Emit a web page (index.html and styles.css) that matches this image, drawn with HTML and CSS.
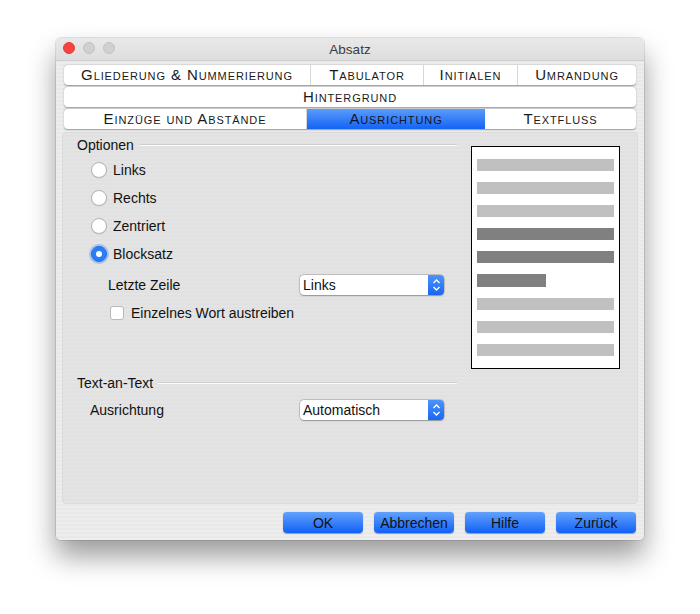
FILE: index.html
```html
<!DOCTYPE html>
<html lang="de">
<head>
  <meta charset="UTF-8">
  <title>Absatz</title>
<link rel="stylesheet" href="styles.css">
</head>
<body>
  <div class="window">
    <div class="titlebar">
      <div class="lights">
        <span class="light red"></span>
        <span class="light"></span>
        <span class="light"></span>
      </div>
      <div class="title">Absatz</div>
    </div>

    <div class="tabs">
      <div class="tabrow">
        <div class="tab" style="width:247px">Gliederung &amp; Nummerierung</div>
        <div class="tab" style="width:113px">Tabulator</div>
        <div class="tab" style="width:94px">Initialen</div>
        <div class="tab last">Umrandung</div>
      </div>
      <div class="tabrow">
        <div class="tab last">Hintergrund</div>
      </div>
      <div class="tabrow">
        <div class="tab" style="width:243px">Einzüge und Abstände</div>
        <div class="tab active" style="width:178px">Ausrichtung</div>
        <div class="tab last">Textfluss</div>
      </div>
    </div>

    <div class="panel">
      <div class="left">
        <div class="group-title"><span>Optionen</span><i></i></div>
        <div class="radios">
          <label class="radio-row"><span class="radio"></span>Links</label>
          <label class="radio-row"><span class="radio"></span>Rechts</label>
          <label class="radio-row"><span class="radio"></span>Zentriert</label>
          <label class="radio-row"><span class="radio checked"></span>Blocksatz</label>
        </div>
        <div class="field-row last-line">
          <span class="field-label">Letzte Zeile</span>
          <div class="select"><span>Links</span><b class="arrows"><svg width="9" height="14" viewBox="0 0 9 14"><path d="M1.5 5 L4.5 2 L7.5 5 M1.5 9 L4.5 12 L7.5 9" fill="none" stroke="#fff" stroke-width="1.3"/></svg></b></div>
        </div>
        <label class="check-row"><span class="checkbox"></span>Einzelnes Wort austreiben</label>

        <div class="group-title second"><span>Text-an-Text</span><i></i></div>
        <div class="field-row align-row">
          <span class="field-label">Ausrichtung</span>
          <div class="select"><span>Automatisch</span><b class="arrows"><svg width="9" height="14" viewBox="0 0 9 14"><path d="M1.5 5 L4.5 2 L7.5 5 M1.5 9 L4.5 12 L7.5 9" fill="none" stroke="#fff" stroke-width="1.3"/></svg></b></div>
        </div>
      </div>

      <div class="preview">
        <div class="bar"></div>
        <div class="bar"></div>
        <div class="bar"></div>
        <div class="bar dark"></div>
        <div class="bar dark"></div>
        <div class="bar dark short"></div>
        <div class="bar"></div>
        <div class="bar"></div>
        <div class="bar"></div>
      </div>
    </div>

    <div class="buttons">
      <button>OK</button>
      <button>Abbrechen</button>
      <button>Hilfe</button>
      <button>Zurück</button>
    </div>
  </div>
</body>
</html>
```

FILE: styles.css
```css
html, body { height: 100%; }
body { margin: 0; padding: 38px 0 0 56px; box-sizing: border-box; background: #fff; font-family: "Liberation Sans", Arial, sans-serif; font-size: 14px; color: #111; }
.window { width: 588px; height: 502px; border-radius: 5px; background: repeating-linear-gradient(#ededed 0, #ededed 2px, #e9e9e9 2px, #e9e9e9 4px); box-shadow: 0 0 0 1px rgba(0,0,0,0.1), 0 16px 28px rgba(0,0,0,0.4); }
.titlebar { height: 22px; position: relative; border-radius: 5px 5px 0 0; background: linear-gradient(#e9e9e9, #dedede); border-bottom: 1px solid #cdcdcd; display: flex; align-items: center; justify-content: center; }
.lights { position: absolute; left: 7px; top: 4px; display: flex; gap: 8px; }
.light { width: 12px; height: 12px; border-radius: 50%; background: #d0d0d0; border: 0.5px solid #c2c2c2; box-sizing: border-box; }
.light.red { background: #f8423f; border-color: #e0403b; }
.title { font-size: 13.5px; color: #3c3c3c; }

.tabs { padding: 4px 8px 0 8px; display: flex; flex-direction: column; gap: 2px; }
.tabrow { display: flex; height: 20px; background: #fff; border-radius: 4px; box-shadow: 0 0.5px 1.5px rgba(0,0,0,0.35); overflow: hidden; }
.tab { font-variant: small-caps; font-size: 15px; letter-spacing: 0.9px; color: #1a1a1a; display: flex; align-items: center; justify-content: center; border-right: 1px solid #d6d6d6; box-sizing: border-box; line-height: 20px; }
.tab.last { flex: 1; border-right: none; }
.tab.active { background: linear-gradient(#5a9cfb, #1363f5); color: #14142a; border-right: none; }

.panel { margin: 3px 6px 0 6px; height: 372px; border-radius: 4px; background: repeating-linear-gradient(#e4e4e4 0, #e4e4e4 2px, #e1e1e1 2px, #e1e1e1 4px); border: 1px solid #dadada; box-sizing: border-box; display: flex; }
.left { width: 408px; padding: 4px 14px 0 14px; box-sizing: border-box; }
.group-title { display: flex; align-items: center; height: 16px; }
.group-title i { flex: 1; height: 1px; background: #fafafa; border-top: 1px solid #cfcfcf; margin-left: 5px; }
.group-title.second { margin-top: 52px; }
.radios { margin-top: 3px; padding-left: 14px; }
.radio-row { display: flex; align-items: center; height: 28px; gap: 6px; }
.radio { width: 16px; height: 16px; border-radius: 50%; background: #fff; border: 1px solid #b3b3b3; box-sizing: border-box; box-shadow: 0 0.5px 1px rgba(0,0,0,0.1); }
.radio.checked { background: #2b7cf6; border-color: #2470e6; box-shadow: 0 0 0 2px rgba(90,150,245,0.45); display: flex; align-items: center; justify-content: center; }
.radio.checked::after { content: ""; width: 6px; height: 6px; border-radius: 50%; background: #fff; }

.field-row { display: flex; align-items: center; height: 20px; }
.field-label { width: 192px; }
.last-line { margin-top: 7px; padding-left: 31px; }
.align-row { margin-top: 9px; padding-left: 13px; }
.align-row .field-label { width: 210px; }
.select { width: 144px; height: 20px; background: #fff; border-radius: 4px; box-shadow: 0 0 0 0.5px rgba(0,0,0,0.25), 0 0.5px 1.5px rgba(0,0,0,0.25); display: flex; align-items: center; justify-content: space-between; overflow: hidden; }
.select span { padding-left: 3px; }
.arrows { width: 16px; height: 20px; background: linear-gradient(#4d93fb, #1767f4); display: flex; align-items: center; justify-content: center; }

.check-row { display: flex; align-items: center; gap: 7px; margin-top: 8px; padding-left: 33px; height: 20px; }
.checkbox { width: 14px; height: 14px; border-radius: 3px; background: #fff; border: 1px solid #b8b8b8; box-sizing: border-box; }

.preview { margin: 13px 0 0 0; width: 149px; height: 223px; background: #fff; border: 1px solid #000; box-sizing: border-box; padding: 12px 5px 0 5px; display: flex; flex-direction: column; gap: 11px; }
.bar { height: 12px; background: #c0c0c0; }
.bar.dark { background: #808080; }
.bar.short { width: 69px; height: 13px; }

.buttons { display: flex; justify-content: flex-end; gap: 11px; padding: 8px 8px 0 0; }
button { width: 80px; height: 21px; border: none; border-radius: 4px; background: linear-gradient(#62a2fd, #1161f5); box-shadow: 0 0.5px 1px rgba(0,0,0,0.35); font-family: "Liberation Sans", Arial, sans-serif; font-size: 14px; color: #111; padding: 0; }
```
